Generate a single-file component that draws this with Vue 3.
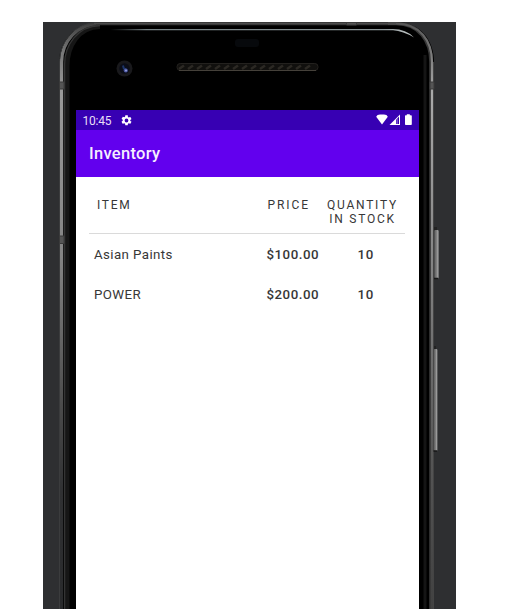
<script setup>
const items = [
  { name: 'Asian Paints', price: '$100.00', quantity: 10 },
  { name: 'POWER', price: '$200.00', quantity: 10 },
]
const grilleHoles = Array.from({ length: 15 }, (_, i) => 182 + i * 9)
</script>

<template>
  <main class="page">
    <div class="emulator">
      <svg class="device" viewBox="43 22 413 587" aria-hidden="true">
        <defs>
          <linearGradient id="rail" x1="0" y1="22" x2="0" y2="609" gradientUnits="userSpaceOnUse">
            <stop offset="0" stop-color="#3c3c3c" />
            <stop offset=".05" stop-color="#777" />
            <stop offset=".12" stop-color="#999" />
            <stop offset=".4" stop-color="#848484" />
            <stop offset=".65" stop-color="#4c4c4c" />
            <stop offset=".8" stop-color="#303133" />
            <stop offset="1" stop-color="#292a2c" />
          </linearGradient>
          <linearGradient id="railRight" x1="0" y1="22" x2="0" y2="609" gradientUnits="userSpaceOnUse">
            <stop offset="0" stop-color="#555" />
            <stop offset=".12" stop-color="#aaa" />
            <stop offset=".4" stop-color="#858585" />
            <stop offset=".75" stop-color="#555" />
            <stop offset="1" stop-color="#414141" />
          </linearGradient>
          <linearGradient id="shine" x1="110" x2="414" y1="0" y2="0" gradientUnits="userSpaceOnUse">
            <stop offset="0" stop-color="#687376" stop-opacity="0" />
            <stop offset=".12" stop-color="#758083" />
            <stop offset=".9" stop-color="#8d9799" />
            <stop offset="1" stop-color="#c5caca" />
          </linearGradient>
          <linearGradient id="button" x1="0" x2="1">
            <stop offset="0" stop-color="#5a5a5a" />
            <stop offset=".55" stop-color="#808080" />
            <stop offset="1" stop-color="#b4b4b4" />
          </linearGradient>
        </defs>
        <path d="M59 620V62C59 42 74 22 100 22H396C420 22 434 40 434 62V620Z" fill="#000" />
        <path d="M67 620V66C67 46 78 27 100 26.5" fill="none" stroke="#161616" stroke-width="5" />
        <path d="M61.5 620V62C61.5 43 76 23.5 100 23.5" fill="none" stroke="url(#rail)" stroke-width="3.4" />
        <path d="M59.5 620V62C59.5 42 74 22.5 98 22.5" fill="none" stroke="#3b3c3d" />
        <path d="M64.6 620V64C64.6 46 77 26 100 25.5" fill="none" stroke="#343434" stroke-width="1.3" />
        <path d="M96 23.5H396C419 23.5 431 41 431 62V620" fill="none" stroke="#383838" stroke-width="3.6" />
        <path d="M388 23.5H396C420 23.5 432 41 432 62V620" fill="none" stroke="url(#railRight)" stroke-width="2.2" />
        <path d="M433.5 62V620" stroke="#444" />
        <path d="M425 55V609" stroke="#151515" stroke-width="3" />
        <path d="M94 23.5H396" stroke="#4c4c4c" />
        <path d="M110 29H393Q406 29 414 37.5Q403 31 393 30.3H110Z" fill="url(#shine)" />
        <path d="M346.5 22.5h10v2.5h-10zM59.5 82h4.500v7H59.5zM430 82h4v7h-4zM59.5 236h4.500v7.500H59.5z" fill="#555" stroke="#3b3b3b" />

        <rect x="235" y="39" width="24" height="8" rx="3" fill="#07090c" />
        <circle cx="124.5" cy="68.5" r="8" fill="#19191c" />
        <circle cx="124.5" cy="68.5" r="5.2" fill="#0b0d18" />
        <path d="M123 65.5l.8 3 2.5 1" stroke="#1d3468" stroke-width="2" fill="none" />
        <circle cx="125.8" cy="70.5" r="2.1" fill="#46539c" />
        <circle cx="126" cy="70.5" r=".9" fill="#a1a8e4" />

        <rect x="177" y="63.5" width="141" height="7" rx="3.2" fill="#11100e" stroke="#23211e" />
        <path v-for="x in grilleHoles" :key="x" :d="`M${x - 3} 69l5-3.5`" stroke="#2c2924" stroke-width="2.5" />
        <path d="M179 70.5H316" stroke="#45413a" />

        <rect x="434" y="227" width="3" height="3" fill="#222" />
        <rect x="434.3" y="230" width="4.2" height="48.5" rx="1" fill="url(#button)" />
        <path d="M434 278.5h4" stroke="#171717" stroke-width="1.5" />
        <rect x="434" y="346" width="2" height="3" fill="#222" />
        <rect x="433.8" y="349" width="3.5" height="102" rx="1" fill="url(#button)" />
        <path d="M433.5 451h3.5" stroke="#171717" stroke-width="1.5" />
      </svg>

      <section class="screen">
        <header class="status">
          <span class="time">10:45</span>
          <svg class="gear" viewBox="1.5 1.5 21 21">
            <path fill="#fff" d="M19.14 12.94c.04-.3.06-.61.06-.94s-.02-.64-.07-.94l2.03-1.58a.49.49 0 0 0 .12-.61l-1.92-3.32a.49.49 0 0 0-.59-.22l-2.39.96c-.5-.38-1.03-.7-1.62-.94l-.36-2.54A.48.48 0 0 0 13.92 2h-3.84a.48.48 0 0 0-.48.41l-.36 2.54c-.59.24-1.13.57-1.62.94l-2.39-.96a.48.48 0 0 0-.59.22L2.72 8.47a.48.48 0 0 0 .12.61l2.03 1.58c-.05.3-.07.63-.07.94s.02.64.07.94l-2.03 1.58a.49.49 0 0 0-.12.61l1.92 3.32c.12.22.37.29.59.22l2.39-.96c.5.38 1.03.7 1.62.94l.36 2.54c.05.24.24.41.48.41h3.84c.24 0 .44-.17.48-.41l.36-2.54c.59-.24 1.13-.56 1.62-.94l2.39.96c.22.08.47 0 .59-.22l1.92-3.32a.48.48 0 0 0-.12-.61zM12 15.6A3.6 3.6 0 1 1 12 8.4a3.6 3.6 0 0 1 0 7.2z" />
          </svg>
          <svg class="signals" viewBox="0 0 37 12">
            <path d="M.2 2.8Q1 .6 4 .6H8Q11 .6 11.8 2.8L6 10.5Z" fill="#fff" />
            <path d="M13.5 11L24 .5V11Z" fill="#fff" />
            <path d="M20.2 5.7L23 2.5V10H20.2Z" fill="#3700b3" />
            <path d="M21.5 4.5V10" stroke="#8365cf" stroke-width=".8" />
            <path d="M29.6 1.2h1.2V.3h3v.9H35q.8 0 .8.8v8.2q0 .8-.8.8h-5.2q-.8 0-.8-.8V2q0-.8.6-.8Z" fill="#fff" />
          </svg>
        </header>
        <div class="toolbar"><h1>Inventory</h1></div>
        <div class="inventory">
          <div class="row head">
            <span>ITEM</span>
            <span>PRICE</span>
            <span class="stock">QUANTITY<br />IN STOCK</span>
          </div>
          <div v-for="item in items" :key="item.name" class="row item">
            <span class="name">{{ item.name }}</span>
            <span class="price">{{ item.price }}</span>
            <span class="quantity">{{ item.quantity }}</span>
          </div>
        </div>
      </section>
    </div>
  </main>
</template>

<style>
body { background: #fff; overflow: hidden; }
</style>

<style scoped>
.page {
  box-sizing: border-box;
  width: 517px;
  height: 609px;
  padding: 22px 61px 0 43px;
  overflow: hidden;
  font-family: Roboto, sans-serif;
}
.emulator {
  position: relative;
  box-sizing: border-box;
  height: 587px;
  padding: 88px 37.5px 0 33px;
  background: #2e2f31;
}
.device {
  position: absolute;
  inset: 0;
  width: 413px;
  height: 587px;
}
.screen {
  position: relative;
  height: 499px;
  background: #fff;
}
.status {
  display: flex;
  align-items: center;
  box-sizing: border-box;
  height: 20px;
  padding: 0 6px 0 6.5px;
  background: #3700b3;
  color: #e7dff7;
}
.time { padding-top: 1px; font-size: 12px; line-height: 20px; letter-spacing: -0.2px; }
.gear { width: 11px; height: 11px; margin-left: 9.5px; }
.signals { width: 37px; height: 12px; margin-left: auto; }
.toolbar {
  display: flex;
  align-items: center;
  height: 46.5px;
  padding-left: 13px;
  background: #6200ee;
}
h1 {
  margin: 2px 0 0;
  color: #f6efff;
  font-size: 16.5px;
  font-weight: 500;
  line-height: 20px;
  letter-spacing: 0.3px;
}
.inventory { padding: 0 13.5px 0 13px; }
.row { display: grid; grid-template-columns: 172px 60px 1fr; }
.head {
  box-sizing: border-box;
  height: 57.5px;
  padding-top: 22.5px;
  border-bottom: 1px solid #dadada;
  color: #373737;
  font-size: 12px;
  line-height: 13.5px;
  letter-spacing: 1.75px;
}
.head span:first-child { padding-left: 8px; }
.head span:nth-child(2) { padding-left: 6.5px; letter-spacing: 1.9px; }
.stock { margin-left: -1px; text-align: center; white-space: nowrap; }
.item {
  height: 40px;
  line-height: 41px;
  color: #373737;
  font-size: 13.3px;
}
.name { padding-left: 5px; letter-spacing: 0.4px; }
.price { padding-left: 5.5px; font-weight: 500; letter-spacing: 0.5px; }
.quantity { padding-left: 36.5px; font-weight: 500; letter-spacing: 0.7px; }
</style>
